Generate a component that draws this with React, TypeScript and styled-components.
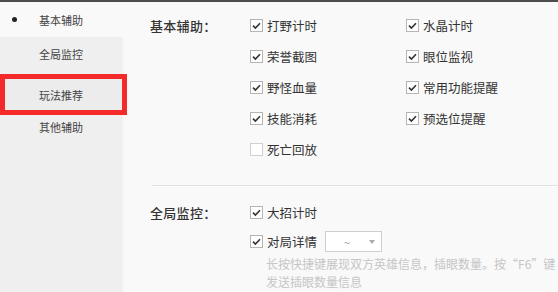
import React from "react";
import styled, { createGlobalStyle } from "styled-components";

const Global = createGlobalStyle`
  html, body { margin: 0; padding: 0; background: #f9f9f9; }
  body { font-family: "Microsoft YaHei", "Noto Sans CJK SC", "Noto Sans", sans-serif; }
  * { box-sizing: border-box; }
`;

const Page = styled.div`
  width: 558px;
  height: 292px;
  overflow: hidden;
  display: flex;
  flex-direction: column;
  background: #f9f9f9;
`;

const TopBar = styled.div`
  height: 2px;
  background: #4d4d4d;
  flex: none;
`;

const Body = styled.div`
  flex: 1;
  display: flex;
  min-height: 0;
`;

const Sidebar = styled.div`
  width: 124px;
  flex: none;
  display: flex;
  flex-direction: column;
`;

const SideHead = styled.div`
  height: 35px;
  display: flex;
  align-items: center;
  padding-left: 12px;
  font-size: 11px;
  color: #444;
  background: #f9f9f9;
`;

const Bullet = styled.span`
  width: 5px;
  height: 5px;
  border-radius: 50%;
  background: #222;
  margin-right: 22px;
`;

const SideList = styled.div`
  flex: 1;
  width: 122px;
  background: #efefef;
  border-right: 2px solid #f4f4f4;
  box-sizing: content-box;
  display: flex;
  flex-direction: column;
`;

const SideItem = styled.div<{ $h: number; $mb?: number }>`
  height: ${(p) => p.$h}px;
  margin-bottom: ${(p) => p.$mb ?? 0}px;
  display: flex;
  align-items: center;
  padding-left: 39px;
  font-size: 11px;
  color: #444;
  flex: none;
`;

const MarkedItem = styled(SideItem)`
  width: 127px;
  border: 5px solid #f42a2a;
  padding-left: 34px;
  background: #ececec;
`;

const Main = styled.div`
  flex: 1;
  padding: 8px 0 0 26px;
  display: flex;
  flex-direction: column;
`;

const Section = styled.div`
  display: grid;
  grid-template-columns: 100px 156px 1fr;
  grid-auto-rows: 31px;
`;

const Label = styled.div`
  font-size: 13px;
  font-weight: 500;
  color: #333;
  display: flex;
  align-items: center;
  grid-column: 1;
  letter-spacing: 0.3px;
`;

const Item = styled.div<{ $col: number }>`
  grid-column: ${(p) => p.$col};
  display: flex;
  align-items: center;
  gap: 4px;
  font-size: 12.5px;
  color: #333;
`;

const Box = styled.span<{ $on: boolean }>`
  width: 13px;
  height: 13px;
  border: 1px solid ${(p) => (p.$on ? "#b5b5b5" : "#d0d0d0")};
  background: #fff;
  display: inline-flex;
  align-items: center;
  justify-content: center;
  flex: none;
`;

const Divider = styled.div`
  margin: 20px 0 10px 2px;
  height: 2px;
  border-top: 1px solid #e2e2e2;
  border-bottom: 1px solid #ffffff;
`;

const Select = styled.div`
  margin-left: 4px;
  width: 57px;
  height: 21px;
  border: 1px solid #cfcfcf;
  background: #fff;
  display: flex;
  align-items: center;
  justify-content: space-between;
  padding: 0 6px 0 18px;
  color: #999;
  font-size: 11px;
`;

const Caret = styled.span`
  width: 0;
  height: 0;
  border-left: 3.5px solid transparent;
  border-right: 3.5px solid transparent;
  border-top: 4px solid #aaa;
`;

const Help = styled.div`
  grid-column: 2 / 4;
  margin-left: 16px;
  width: 300px;
  font-size: 12px;
  line-height: 18px;
  color: #c6c6c6;
  white-space: nowrap;
`;

const Tight = styled.div`
  display: grid;
  grid-template-columns: 100px 1fr;
  grid-auto-rows: 27px;
`;

const Tick = () => (
  <svg width="11" height="11" viewBox="0 0 11 11">
    <path d="M2 5.6 L4.4 8 L9 3.2" fill="none" stroke="#333" strokeWidth="1.6" />
  </svg>
);

const Check: React.FC<{ on?: boolean; text: string; col: number; children?: React.ReactNode }> = ({
  on = true,
  text,
  col,
  children,
}) => (
  <Item $col={col}>
    <Box $on={on}>{on && <Tick />}</Box>
    {text}
    {children}
  </Item>
);

export default function App() {
  return (
    <>
      <Global />
      <Page>
        <TopBar />
        <Body>
          <Sidebar>
            <SideHead>
              <Bullet />
              基本辅助
            </SideHead>
            <SideList>
              <SideItem $h={33} $mb={4}>全局监控</SideItem>
              <MarkedItem $h={41}>玩法推荐</MarkedItem>
              <SideItem $h={24}>其他辅助</SideItem>
            </SideList>
          </Sidebar>
          <Main>
            <Section>
              <Label>基本辅助：</Label>
              <Check col={2} text="打野计时" />
              <Check col={3} text="水晶计时" />
              <Check col={2} text="荣誉截图" />
              <Check col={3} text="眼位监视" />
              <Check col={2} text="野怪血量" />
              <Check col={3} text="常用功能提醒" />
              <Check col={2} text="技能消耗" />
              <Check col={3} text="预选位提醒" />
              <Check col={2} text="死亡回放" on={false} />
            </Section>
            <Divider />
            <Section>
              <Label>全局监控：</Label>
              <Check col={2} text="大招计时" />
            </Section>
            <Tight>
              <Check col={2} text="对局详情">
                <Select>
                  ~
                  <Caret />
                </Select>
              </Check>
            </Tight>
            <Tight>
              <Help>
                长按快捷键展现双方英雄信息，插眼数量。按“F6”键
                <br />
                发送插眼数量信息
              </Help>
            </Tight>
          </Main>
        </Body>
      </Page>
    </>
  );
}
